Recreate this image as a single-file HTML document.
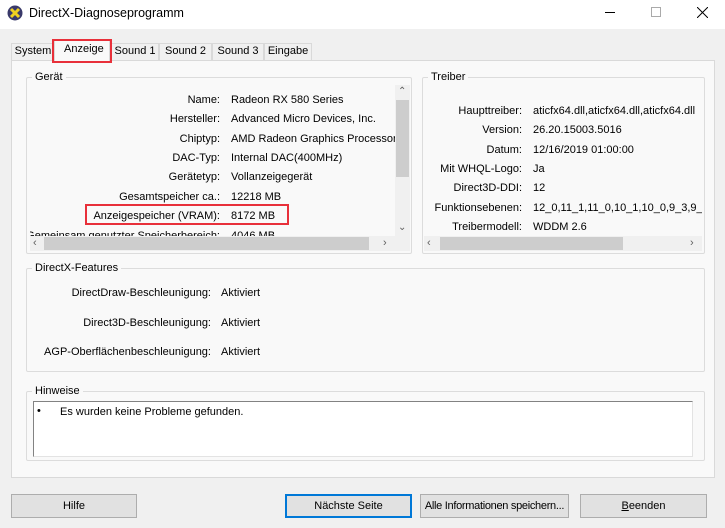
<!DOCTYPE html><html><head><style>
*{margin:0;padding:0;box-sizing:border-box}
body{width:725px;height:528px;background:#f0f0f0;font-family:"Liberation Sans",sans-serif;font-size:11px;color:#000;position:relative;overflow:hidden}
.a{position:absolute}
.t{position:absolute;white-space:nowrap;line-height:14px}
.r{text-align:right}
.grp{position:absolute;border:1px solid #dcdcdc;border-radius:2px}
.gl{position:absolute;background:#f9f9f9;padding:0 3px;line-height:13px;top:-7px;left:5px}
.btn{position:absolute;top:494px;height:24px;background:#e1e1e1;border:1px solid #adadad;text-align:center;line-height:22px;white-space:nowrap;overflow:hidden}
.tab{position:absolute;top:43px;height:18px;border:1px solid #d9d9d9;text-align:center;line-height:15px;white-space:nowrap;font-size:11px}
</style></head><body>
<div class="a" style="left:0;top:0;width:725px;height:29px;background:#fff"></div>
<svg class="a" style="left:7px;top:5px" width="16" height="16"><circle cx="8" cy="8" r="7.5" fill="#3a3a6a"/><path d="M4 4L12 12M12 4L4 12" stroke="#f0d020" stroke-width="3"/></svg>
<div class="t" style="left:29px;top:6px;font-size:12.5px">DirectX-Diagnoseprogramm</div>
<div class="a" style="left:605px;top:12px;width:10px;height:1px;background:#000"></div>
<div class="a" style="left:651px;top:7px;width:10px;height:10px;border:1px solid #aaa"></div>
<svg class="a" style="left:697px;top:7px" width="11" height="11"><path d="M0 0L11 11M11 0L0 11" stroke="#000" stroke-width="1"/></svg>
<!-- tabs -->
<div class="tab" style="left:11px;width:44px">System</div>
<div class="tab" style="left:111px;width:48px">Sound 1</div>
<div class="tab" style="left:159px;width:53px">Sound 2</div>
<div class="tab" style="left:212px;width:52px">Sound 3</div>
<div class="tab" style="left:264px;width:48px">Eingabe</div>
<div class="a" style="left:11px;top:60px;width:704px;height:418px;background:#f9f9f9;border:1px solid #d9d9d9"></div>
<div class="a" style="left:54px;top:40px;width:56px;height:21px;background:#f9f9f9;border:1px solid #d9d9d9;border-bottom:none"></div>
<div class="t" style="left:64px;top:42px">Anzeige</div>
<div class="a" style="left:52px;top:39px;width:60px;height:24px;border:2px solid #e8303a"></div>
<!-- Gerät -->
<div class="grp" style="left:26px;top:77px;width:386px;height:177px"><div class="gl">Gerät</div></div>
<div class="a" style="left:30px;top:85px;width:380px;height:166px;overflow:hidden">
<div class="t r" style="left:0;width:190px;top:8px">Name:</div><div class="t" style="left:201px;top:8px">Radeon RX 580 Series</div>
<div class="t r" style="left:0;width:190px;top:27px">Hersteller:</div><div class="t" style="left:201px;top:27px">Advanced Micro Devices, Inc.</div>
<div class="t r" style="left:0;width:190px;top:47px">Chiptyp:</div><div class="t" style="left:201px;top:47px">AMD Radeon Graphics Processor (0x67DF)</div>
<div class="t r" style="left:0;width:190px;top:66px">DAC-Typ:</div><div class="t" style="left:201px;top:66px">Internal DAC(400MHz)</div>
<div class="t r" style="left:0;width:190px;top:85px">Gerätetyp:</div><div class="t" style="left:201px;top:85px">Vollanzeigegerät</div>
<div class="t r" style="left:0;width:190px;top:105px">Gesamtspeicher ca.:</div><div class="t" style="left:201px;top:105px">12218 MB</div>
<div class="t r" style="left:0;width:190px;top:124px">Anzeigespeicher (VRAM):</div><div class="t" style="left:201px;top:124px">8172 MB</div>
<div class="t r" style="left:-40px;width:230px;top:144px">Gemeinsam genutzter Speicherbereich:</div><div class="t" style="left:201px;top:144px">4046 MB</div>
<div class="a" style="left:365px;top:0;width:15px;height:151px;background:#f0f0f0"></div>
<div class="a" style="left:366px;top:15px;width:13px;height:77px;background:#cdcdcd"></div>
<div class="t" style="left:368px;top:0;font-size:10px;color:#606060">&#8963;</div>
<div class="t" style="left:368px;top:136px;font-size:10px;color:#606060">&#8964;</div>
<div class="a" style="left:0;top:151px;width:380px;height:15px;background:#f0f0f0"></div>
<div class="a" style="left:14px;top:152px;width:325px;height:13px;background:#cdcdcd"></div>
<div class="t" style="left:3px;top:151px;color:#606060">&lsaquo;</div><div class="t" style="left:353px;top:151px;color:#606060">&rsaquo;</div>
</div>
<div class="a" style="left:85px;top:204px;width:204px;height:21px;border:2px solid #e8303a"></div>
<!-- Treiber -->
<div class="grp" style="left:422px;top:77px;width:283px;height:177px"><div class="gl">Treiber</div></div>
<div class="a" style="left:424px;top:85px;width:278px;height:166px;overflow:hidden">
<div class="t r" style="left:0;width:98px;top:19px">Haupttreiber:</div><div class="t" style="left:109px;top:19px">aticfx64.dll,aticfx64.dll,aticfx64.dll</div>
<div class="t r" style="left:0;width:98px;top:38px">Version:</div><div class="t" style="left:109px;top:38px">26.20.15003.5016</div>
<div class="t r" style="left:0;width:98px;top:58px">Datum:</div><div class="t" style="left:109px;top:58px">12/16/2019 01:00:00</div>
<div class="t r" style="left:0;width:98px;top:77px">Mit WHQL-Logo:</div><div class="t" style="left:109px;top:77px">Ja</div>
<div class="t r" style="left:0;width:98px;top:96px">Direct3D-DDI:</div><div class="t" style="left:109px;top:96px">12</div>
<div class="t r" style="left:0;width:98px;top:116px">Funktionsebenen:</div><div class="t" style="left:109px;top:116px">12_0,11_1,11_0,10_1,10_0,9_3,9_2</div>
<div class="t r" style="left:0;width:98px;top:135px">Treibermodell:</div><div class="t" style="left:109px;top:135px">WDDM 2.6</div>
<div class="a" style="left:0;top:151px;width:278px;height:15px;background:#f0f0f0"></div>
<div class="a" style="left:16px;top:152px;width:183px;height:13px;background:#cdcdcd"></div>
<div class="t" style="left:3px;top:151px;color:#606060">&lsaquo;</div><div class="t" style="left:266px;top:151px;color:#606060">&rsaquo;</div>
</div>
<!-- Features -->
<div class="grp" style="left:26px;top:268px;width:679px;height:104px"><div class="gl">DirectX-Features</div></div>
<div class="t r" style="left:20px;width:191px;top:286px">DirectDraw-Beschleunigung:</div><div class="t" style="left:221px;top:286px">Aktiviert</div>
<div class="t r" style="left:20px;width:191px;top:316px">Direct3D-Beschleunigung:</div><div class="t" style="left:221px;top:316px">Aktiviert</div>
<div class="t r" style="left:20px;width:191px;top:345px">AGP-Oberflächenbeschleunigung:</div><div class="t" style="left:221px;top:345px">Aktiviert</div>
<!-- Hinweise -->
<div class="grp" style="left:26px;top:391px;width:679px;height:70px"><div class="gl">Hinweise</div></div>
<div class="a" style="left:33px;top:401px;width:660px;height:56px;background:#fff;border:1px solid #828282;border-right-color:#e3e3e3;border-bottom-color:#e3e3e3"></div>
<div class="t" style="left:37px;top:404px">•</div><div class="t" style="left:60px;top:405px">Es wurden keine Probleme gefunden.</div>
<!-- buttons -->
<div class="btn" style="left:11px;width:126px">Hilfe</div>
<div class="btn" style="left:285px;width:127px;border:2px solid #0078d7;line-height:20px">Nächste Seite</div>
<div class="btn" style="left:420px;width:149px;letter-spacing:-0.3px">Alle Informationen speichern...</div>
<div class="btn" style="left:580px;width:127px"><u>B</u>eenden</div>
</body></html>
